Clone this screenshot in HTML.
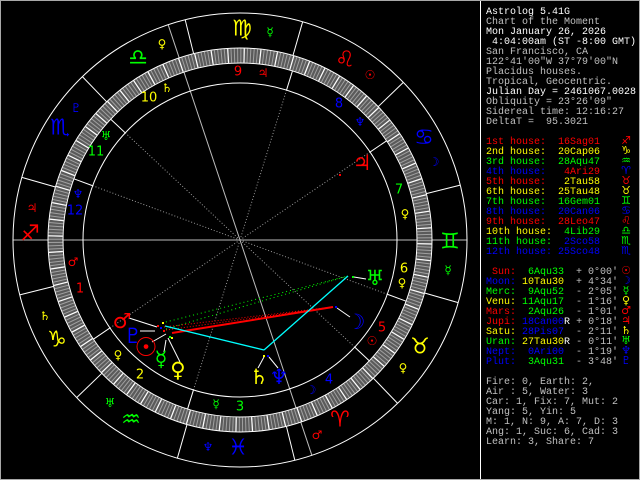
<!DOCTYPE html>
<html><head><meta charset="utf-8"><style>
html,body{margin:0;padding:0;background:#000;}
#w{position:relative;width:638px;height:478px;border:1px solid #a8a8a8;background:#000;overflow:hidden;}
#p{position:absolute;left:485px;top:7px;font-family:"Liberation Mono",monospace;font-size:10px;line-height:10px;white-space:pre;color:#c0c0c0;}
.w{color:#fff}.r{color:#f00}.y{color:#ff0}.g{color:#0f0}.b{color:#00f}
svg text{font-family:"DejaVu Sans",sans-serif;}
</style></head><body><div id="w">
<svg width="640" height="480" style="position:absolute;left:-1px;top:-1px" xmlns="http://www.w3.org/2000/svg">
<line x1="480.5" y1="0" x2="480.5" y2="480" stroke="#fff"/>
<line x1="13" y1="240" x2="467" y2="240" stroke="#bbb"/>
<line x1="13" y1="240" x2="467" y2="240" stroke="#bbb" transform="rotate(-108.46 240 240)"/>
<g stroke="#999" stroke-dasharray="1 2">
<line x1="240" y1="240" x2="397" y2="240" transform="rotate(-214.08 240 240)"/>
<line x1="240" y1="240" x2="397" y2="240" transform="rotate(-252.76 240 240)"/>
<line x1="240" y1="240" x2="397" y2="240" transform="rotate(43.05 240 240)"/>
<line x1="240" y1="240" x2="397" y2="240" transform="rotate(20.22 240 240)"/>
<line x1="240" y1="240" x2="397" y2="240" transform="rotate(-34.08 240 240)"/>
<line x1="240" y1="240" x2="397" y2="240" transform="rotate(-72.76 240 240)"/>
<line x1="240" y1="240" x2="397" y2="240" transform="rotate(-136.95 240 240)"/>
<line x1="240" y1="240" x2="397" y2="240" transform="rotate(-159.78 240 240)"/>
</g>
<circle cx="240" cy="240" r="184.5" fill="none" stroke="#5a5a5a" stroke-width="14"/>
<circle cx="240" cy="240" r="184.5" fill="none" stroke="#a0a0a0" stroke-width="14" stroke-dasharray="1 2.22" stroke-dashoffset="-3.28"/>
<circle cx="240" cy="240" r="184.5" fill="none" stroke="#fff" stroke-width="14" stroke-dasharray="1.2 14.9" stroke-dashoffset="-3.28"/>
<g fill="none" stroke="#fff">
<circle cx="240" cy="240" r="227"/>
<circle cx="240" cy="240" r="192"/>
<circle cx="240" cy="240" r="177"/>
<circle cx="240" cy="240" r="157"/>
</g>
<g stroke="#fff">
<line x1="432" y1="240" x2="467" y2="240" transform="rotate(76.02 240 240)"/>
<line x1="432" y1="240" x2="467" y2="240" transform="rotate(46.02 240 240)"/>
<line x1="432" y1="240" x2="467" y2="240" transform="rotate(16.02 240 240)"/>
<line x1="432" y1="240" x2="467" y2="240" transform="rotate(-13.98 240 240)"/>
<line x1="432" y1="240" x2="467" y2="240" transform="rotate(-43.98 240 240)"/>
<line x1="432" y1="240" x2="467" y2="240" transform="rotate(-73.98 240 240)"/>
<line x1="432" y1="240" x2="467" y2="240" transform="rotate(-103.98 240 240)"/>
<line x1="432" y1="240" x2="467" y2="240" transform="rotate(-133.98 240 240)"/>
<line x1="432" y1="240" x2="467" y2="240" transform="rotate(-163.98 240 240)"/>
<line x1="432" y1="240" x2="467" y2="240" transform="rotate(-193.98 240 240)"/>
<line x1="432" y1="240" x2="467" y2="240" transform="rotate(-223.98 240 240)"/>
<line x1="432" y1="240" x2="467" y2="240" transform="rotate(-253.98 240 240)"/>
<line x1="397" y1="240" x2="417" y2="240" transform="rotate(-214.08 240 240)"/>
<line x1="397" y1="240" x2="417" y2="240" transform="rotate(-252.76 240 240)"/>
<line x1="397" y1="240" x2="417" y2="240" transform="rotate(43.05 240 240)"/>
<line x1="397" y1="240" x2="417" y2="240" transform="rotate(20.22 240 240)"/>
<line x1="397" y1="240" x2="417" y2="240" transform="rotate(-34.08 240 240)"/>
<line x1="397" y1="240" x2="417" y2="240" transform="rotate(-72.76 240 240)"/>
<line x1="397" y1="240" x2="417" y2="240" transform="rotate(-136.95 240 240)"/>
<line x1="397" y1="240" x2="417" y2="240" transform="rotate(-159.78 240 240)"/>
</g>
<g stroke="#0f0" stroke-dasharray="1 3">
<line x1="162" y1="323" x2="348" y2="276"/>
<line x1="166" y1="329" x2="348" y2="276"/>
</g>
<g stroke="#f00" stroke-dasharray="1 2">
<line x1="164" y1="327" x2="333" y2="307"/>
<line x1="166" y1="330" x2="333" y2="307"/>
</g>
<line x1="172" y1="333" x2="333" y2="307" stroke="#f00" stroke-width="2"/>
<g stroke="#0ff" stroke-width="1.3">
<line x1="165" y1="326" x2="264" y2="350"/>
<line x1="264" y1="350" x2="348" y2="276"/>
</g>
<g stroke="#fff">
<line x1="129" y1="318" x2="157" y2="327"/>
<line x1="140" y1="331" x2="155" y2="331"/>
<line x1="152" y1="342" x2="166" y2="334"/>
<line x1="164" y1="352" x2="166" y2="340"/>
<line x1="180" y1="362" x2="168" y2="338"/>
<line x1="258" y1="368" x2="264" y2="357"/>
<line x1="278" y1="368" x2="269" y2="357"/>
<line x1="350" y1="317" x2="337" y2="308"/>
<line x1="366" y1="279" x2="354" y2="277"/>
</g>
<g>
<rect x="157" y="325" width="2" height="2" fill="#f00"/>
<rect x="160" y="327" width="2" height="2" fill="#00f"/>
<rect x="162" y="322" width="2" height="2" fill="#ff0"/>
<rect x="163" y="330" width="2" height="2" fill="#f00"/>
<rect x="169" y="336" width="2" height="2" fill="#0f0"/>
<rect x="171" y="337" width="2" height="2" fill="#ff0"/>
<rect x="263" y="355" width="2" height="2" fill="#ff0"/>
<rect x="267" y="355" width="2" height="2" fill="#00f"/>
<rect x="335" y="306" width="2" height="2" fill="#00f"/>
<rect x="352" y="276" width="2" height="2" fill="#0f0"/>
<rect x="339" y="174" width="2" height="2" fill="#f00"/>
</g>
<g text-anchor="middle" dominant-baseline="central" font-size="22">
<text x="30" y="234" fill="#f00">♐</text>
<text x="60" y="128" fill="#00f">♏</text>
<text x="138" y="58" fill="#0f0">♎</text>
<text x="242" y="29" fill="#ff0">♍</text>
<text x="345" y="60" fill="#f00">♌</text>
<text x="424" y="138" fill="#00f">♋</text>
<text x="450" y="242" fill="#0f0">♊</text>
<text x="420" y="347" fill="#ff0">♉</text>
<text x="340" y="420" fill="#f00">♈</text>
<text x="238" y="448" fill="#00f">♓</text>
<text x="131" y="420" fill="#0f0">♒</text>
<text x="57" y="340" fill="#ff0">♑</text>
</g>
<g text-anchor="middle" dominant-baseline="central" font-size="12">
<text x="32" y="208" fill="#f00">♃</text>
<text x="76" y="108" fill="#00f">♇</text>
<text x="162" y="44" fill="#ff0">♀</text>
<text x="270" y="32" fill="#0f0">☿</text>
<text x="370" y="75" fill="#f00">☉</text>
<text x="434" y="162" fill="#00f">☽</text>
<text x="448" y="270" fill="#0f0">☿</text>
<text x="403" y="368" fill="#ff0">♀</text>
<text x="317" y="435" fill="#f00">♂</text>
<text x="208" y="447" fill="#00f">♆</text>
<text x="110" y="403" fill="#0f0">♅</text>
<text x="45" y="316" fill="#ff0">♄</text>
<text x="73" y="262" fill="#f00">♂</text>
<text x="118" y="355" fill="#ff0">♀</text>
<text x="216" y="404" fill="#0f0">☿</text>
<text x="311" y="390" fill="#00f">☽</text>
<text x="372" y="341" fill="#f00">☉</text>
<text x="402" y="283" fill="#ff0">♀</text>
<text x="405" y="214" fill="#ff0">♀</text>
<text x="360" y="122" fill="#00f">♆</text>
<text x="263" y="73" fill="#f00">♃</text>
<text x="167" y="88" fill="#ff0">♄</text>
<text x="106" y="136" fill="#0f0">♅</text>
<text x="78" y="194" fill="#00f">♆</text>
</g>
<g text-anchor="middle" dominant-baseline="central" font-size="13" style="font-family:'Liberation Mono',monospace">
<text x="80" y="289" fill="#f00">1</text>
<text x="140" y="375" fill="#ff0">2</text>
<text x="240" y="407" fill="#0f0">3</text>
<text x="329" y="380" fill="#00f">4</text>
<text x="382" y="328" fill="#f00">5</text>
<text x="404" y="269" fill="#ff0">6</text>
<text x="399" y="190" fill="#0f0">7</text>
<text x="339" y="104" fill="#00f">8</text>
<text x="238" y="72" fill="#f00">9</text>
<text x="149" y="98" fill="#ff0">10</text>
<text x="96" y="152" fill="#0f0">11</text>
<text x="75" y="211" fill="#00f">12</text>
</g>
<g text-anchor="middle" dominant-baseline="central" font-size="21">
<text x="122" y="321" fill="#f00">♂</text>
<text x="133" y="336" fill="#00f">♇</text>
<text x="146" y="348" fill="#f00" font-size="26">☉</text>
<text x="161" y="359" fill="#0f0">☿</text>
<text x="178" y="370" fill="#ff0">♀</text>
<text x="259" y="377" fill="#ff0">♄</text>
<text x="279" y="377" fill="#00f">♆</text>
<text x="356" y="322" fill="#00f">☽</text>
<text x="375" y="278" fill="#0f0">♅</text>
<text x="362" y="163" fill="#f00">♃</text>
</g>
</svg>
<div id="p"><span class="w">Astrolog 5.41G</span>
Chart of the Moment
<span class="w">Mon January 26, 2026</span>
<span class="w"> 4:04:00am (ST -8:00 GMT)</span>
San Francisco, CA
122°41'00"W 37°79'00"N
Placidus houses.
Tropical, Geocentric.
<span class="w">Julian Day = 2461067.0028</span>
Obliquity = 23°26'09"
Sidereal time: 12:16:27
DeltaT =  95.3021

<span class="r">1st house:  16Sag01</span>
<span class="y">2nd house:  20Cap06</span>
<span class="g">3rd house:  28Aqu47</span>
<span class="b">4th house:   </span><span class="r">4Ari29</span>
<span class="r">5th house:   </span><span class="y">2Tau58</span>
<span class="y">6th house:  25Tau48</span>
<span class="g">7th house:  16Gem01</span>
<span class="b">8th house:  20Can06</span>
<span class="r">9th house:  28Leo47</span>
<span class="y">10th house:  </span><span class="g">4Lib29</span>
<span class="g">11th house:  </span><span class="b">2Sco58</span>
<span class="b">12th house: 25Sco48</span>

<span class="r"> Sun:</span>  <span class="g">6Aqu33</span>  + 0°00'
<span class="b">Moon:</span> <span class="y">10Tau30</span>  + 4°34'
<span class="g">Merc:</span>  <span class="g">9Aqu52</span>  - 2°05'
<span class="y">Venu:</span> <span class="g">11Aqu17</span>  - 1°16'
<span class="r">Mars:</span>  <span class="g">2Aqu26</span>  - 1°01'
<span class="r">Jupi:</span> <span class="b">18Can00</span><span class="w">R</span> + 0°18'
<span class="y">Satu:</span> <span class="b">28Pis07</span>  - 2°11'
<span class="g">Uran:</span> <span class="y">27Tau30</span><span class="w">R</span> - 0°11'
<span class="b">Nept:</span>  <span class="b">0Ari00</span>  - 1°19'
<span class="b">Plut:</span>  <span class="g">3Aqu31</span>  - 3°48'

Fire: 0, Earth: 2,
Air : 5, Water: 3
Car: 1, Fix: 7, Mut: 2
Yang: 5, Yin: 5
M: 1, N: 9, A: 7, D: 3
Ang: 1, Suc: 6, Cad: 3
Learn: 3, Share: 7</div>
<div style="position:absolute;left:618px;top:135px;width:14px;font-family:'DejaVu Sans',sans-serif;font-size:11px;line-height:10px;white-space:pre;text-align:center"><span class="r">♐</span>
<span class="y">♑</span>
<span class="g">♒</span>
<span class="b">♈</span>
<span class="r">♉</span>
<span class="y">♉</span>
<span class="g">♊</span>
<span class="b">♋</span>
<span class="r">♌</span>
<span class="g">♎</span>
<span class="g">♏</span>
<span class="b">♏</span>

<span class="r">☉</span>
<span class="b">☽</span>
<span class="g">☿</span>
<span class="y">♀</span>
<span class="r">♂</span>
<span class="r">♃</span>
<span class="y">♄</span>
<span class="g">♅</span>
<span class="b">♆</span>
<span class="b">♇</span></div>
</div></body></html>
